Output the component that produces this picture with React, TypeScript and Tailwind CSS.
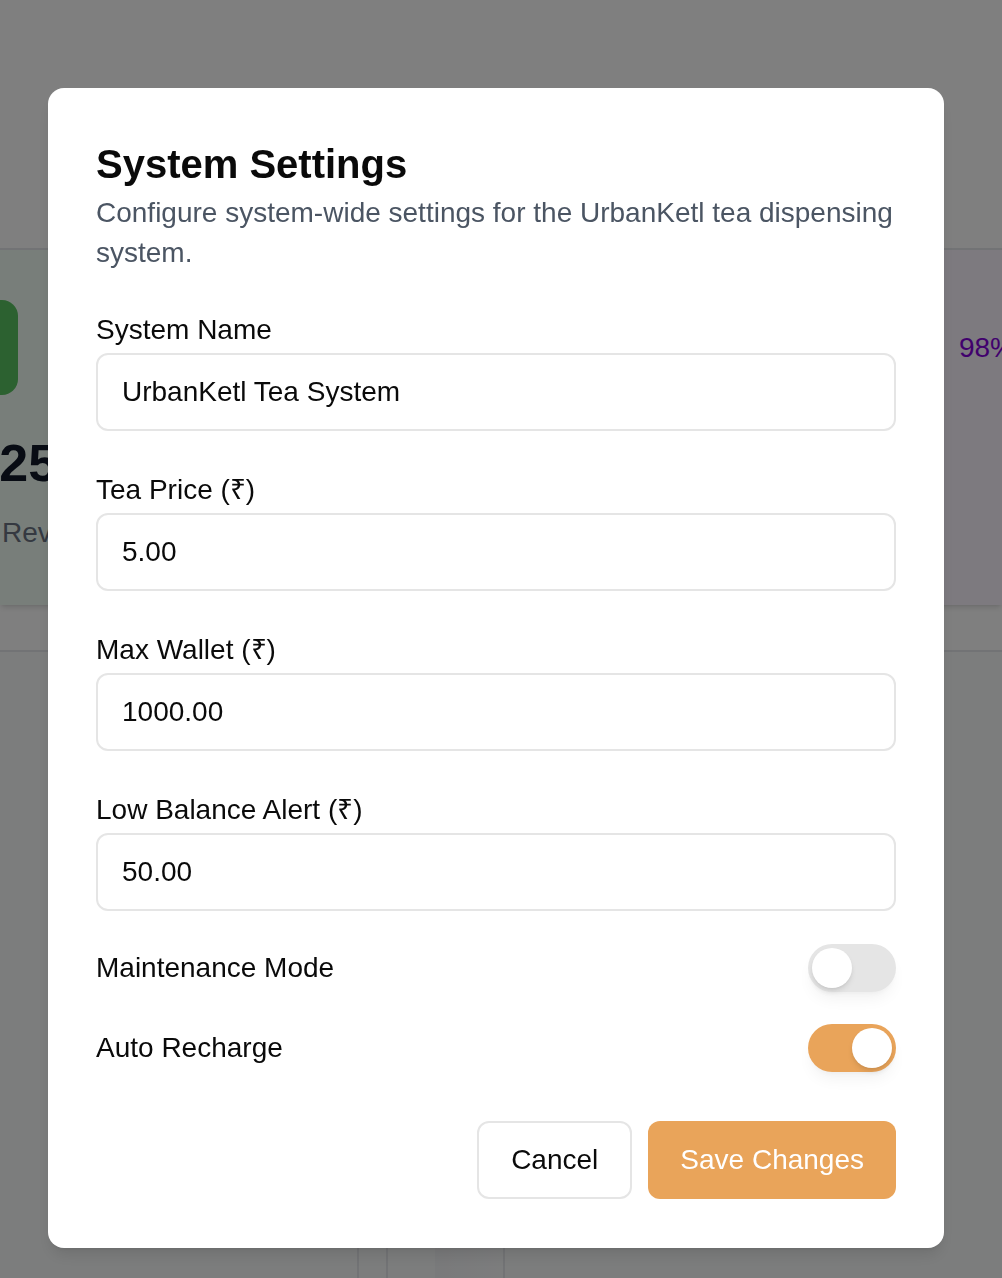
import React, { useState } from 'react';

const fields = [
  { id: 'name', label: 'System Name', value: 'UrbanKetl Tea System' },
  { id: 'price', label: 'Tea Price (₹)', value: '5.00' },
  { id: 'wallet', label: 'Max Wallet (₹)', value: '1000.00' },
  { id: 'alert', label: 'Low Balance Alert (₹)', value: '50.00' },
];

function Toggle({ on, onChange }: { on: boolean; onChange: () => void }) {
  return (
    <button
      type="button"
      onClick={onChange}
      className={`flex h-[48px] w-[88px] items-center rounded-full shadow-lg shadow-black/5 ${
        on ? 'bg-[#e9a45a]' : 'bg-[#e5e5e5]'
      }`}
    >
      <span
        className={`block h-[40px] w-[40px] rounded-full bg-white shadow-md ${on ? 'ml-[44px]' : 'ml-[4px]'}`}
      />
    </button>
  );
}

// Dashboard that sits behind the dialog
function Dashboard() {
  return (
    <div className="flex h-screen flex-col overflow-hidden bg-white">
      <div className="h-[250px] shrink-0 border-b-2 border-gray-200" />
      <div className="flex h-[355px] shrink-0 shadow-md">
        <div className="-ml-[80px] flex w-[520px] flex-col bg-green-50 pt-[50px]">
          <div className="h-[95px] w-[98px] rounded-2xl bg-[#58c261]" />
          <div className="mt-[40px] pl-[36px] text-[52px] font-bold leading-[56px] text-gray-900">1,250</div>
          <div className="mt-[22px] pl-[82px] text-[28px] leading-[40px] text-gray-500">Revenue</div>
        </div>
        <div className="ml-[24px] flex flex-1 flex-col items-end bg-purple-50 pt-[78px]">
          <div className="-mr-[13px] text-[28px] leading-[40px] text-purple-700">98%</div>
        </div>
      </div>
      <div className="h-[47px] shrink-0 border-b-2 border-gray-200" />
      <div className="flex flex-1 flex-col bg-gray-50">
        <div className="flex-1" />
        <div className="flex h-[30px]">
          <div className="ml-[357px] w-[29px] border-l-2 border-gray-200" />
          <div className="w-[49px] border-l-2 border-gray-200" />
          <div className="w-[68px] border-l border-gray-100 bg-gradient-to-r from-gray-100 to-gray-50" />
          <div className="w-[200px] border-l-2 border-gray-200" />
        </div>
      </div>
    </div>
  );
}

export default function App() {
  const [maintenance, setMaintenance] = useState(false);
  const [autoRecharge, setAutoRecharge] = useState(true);

  return (
    <div className="relative font-['Liberation_Sans',Arial,sans-serif]">
      <Dashboard />
      <div className="fixed inset-0 bg-black/50 pl-[48px] pt-[88px]">
        <div className="w-[896px] rounded-2xl bg-white px-[48px] pb-[49px] pt-[48px] shadow-lg">
          <h2 className="pt-[4px] text-[40px] font-bold leading-[48px] text-[#0a0a0a]">System Settings</h2>
          <p className="mt-[5px] text-[28px] leading-[40px] text-[#4b5563]">
            Configure system-wide settings for the UrbanKetl tea dispensing system.
          </p>

          <div className="mt-[37px] flex flex-col gap-[39px]">
            {fields.map(f => (
              <div key={f.id}>
                <label htmlFor={f.id} className="block text-[28px] leading-[40px] text-[#0a0a0a]">
                  {f.label}
                </label>
                <input
                  id={f.id}
                  readOnly
                  value={f.value}
                  className="mt-[3px] h-[78px] w-full rounded-xl border-2 border-[#e5e5e5] bg-white px-[24px] text-[28px] text-[#0a0a0a] outline-none"
                />
              </div>
            ))}
          </div>

          <div className="mt-[33px] flex h-[48px] items-center justify-between">
            <span className="text-[28px] text-[#0a0a0a]">Maintenance Mode</span>
            <Toggle on={maintenance} onChange={() => setMaintenance(!maintenance)} />
          </div>
          <div className="mt-[32px] flex h-[48px] items-center justify-between">
            <span className="text-[28px] text-[#0a0a0a]">Auto Recharge</span>
            <Toggle on={autoRecharge} onChange={() => setAutoRecharge(!autoRecharge)} />
          </div>

          <div className="mt-[49px] flex justify-end gap-[16px]">
            <button className="h-[78px] rounded-xl border-2 border-[#e5e5e5] bg-white px-[32px] text-[28px] text-[#0a0a0a]">
              Cancel
            </button>
            <button className="h-[78px] rounded-xl bg-[#e9a45a] px-[32px] text-[28px] text-white">
              Save Changes
            </button>
          </div>
        </div>
      </div>
    </div>
  );
}
